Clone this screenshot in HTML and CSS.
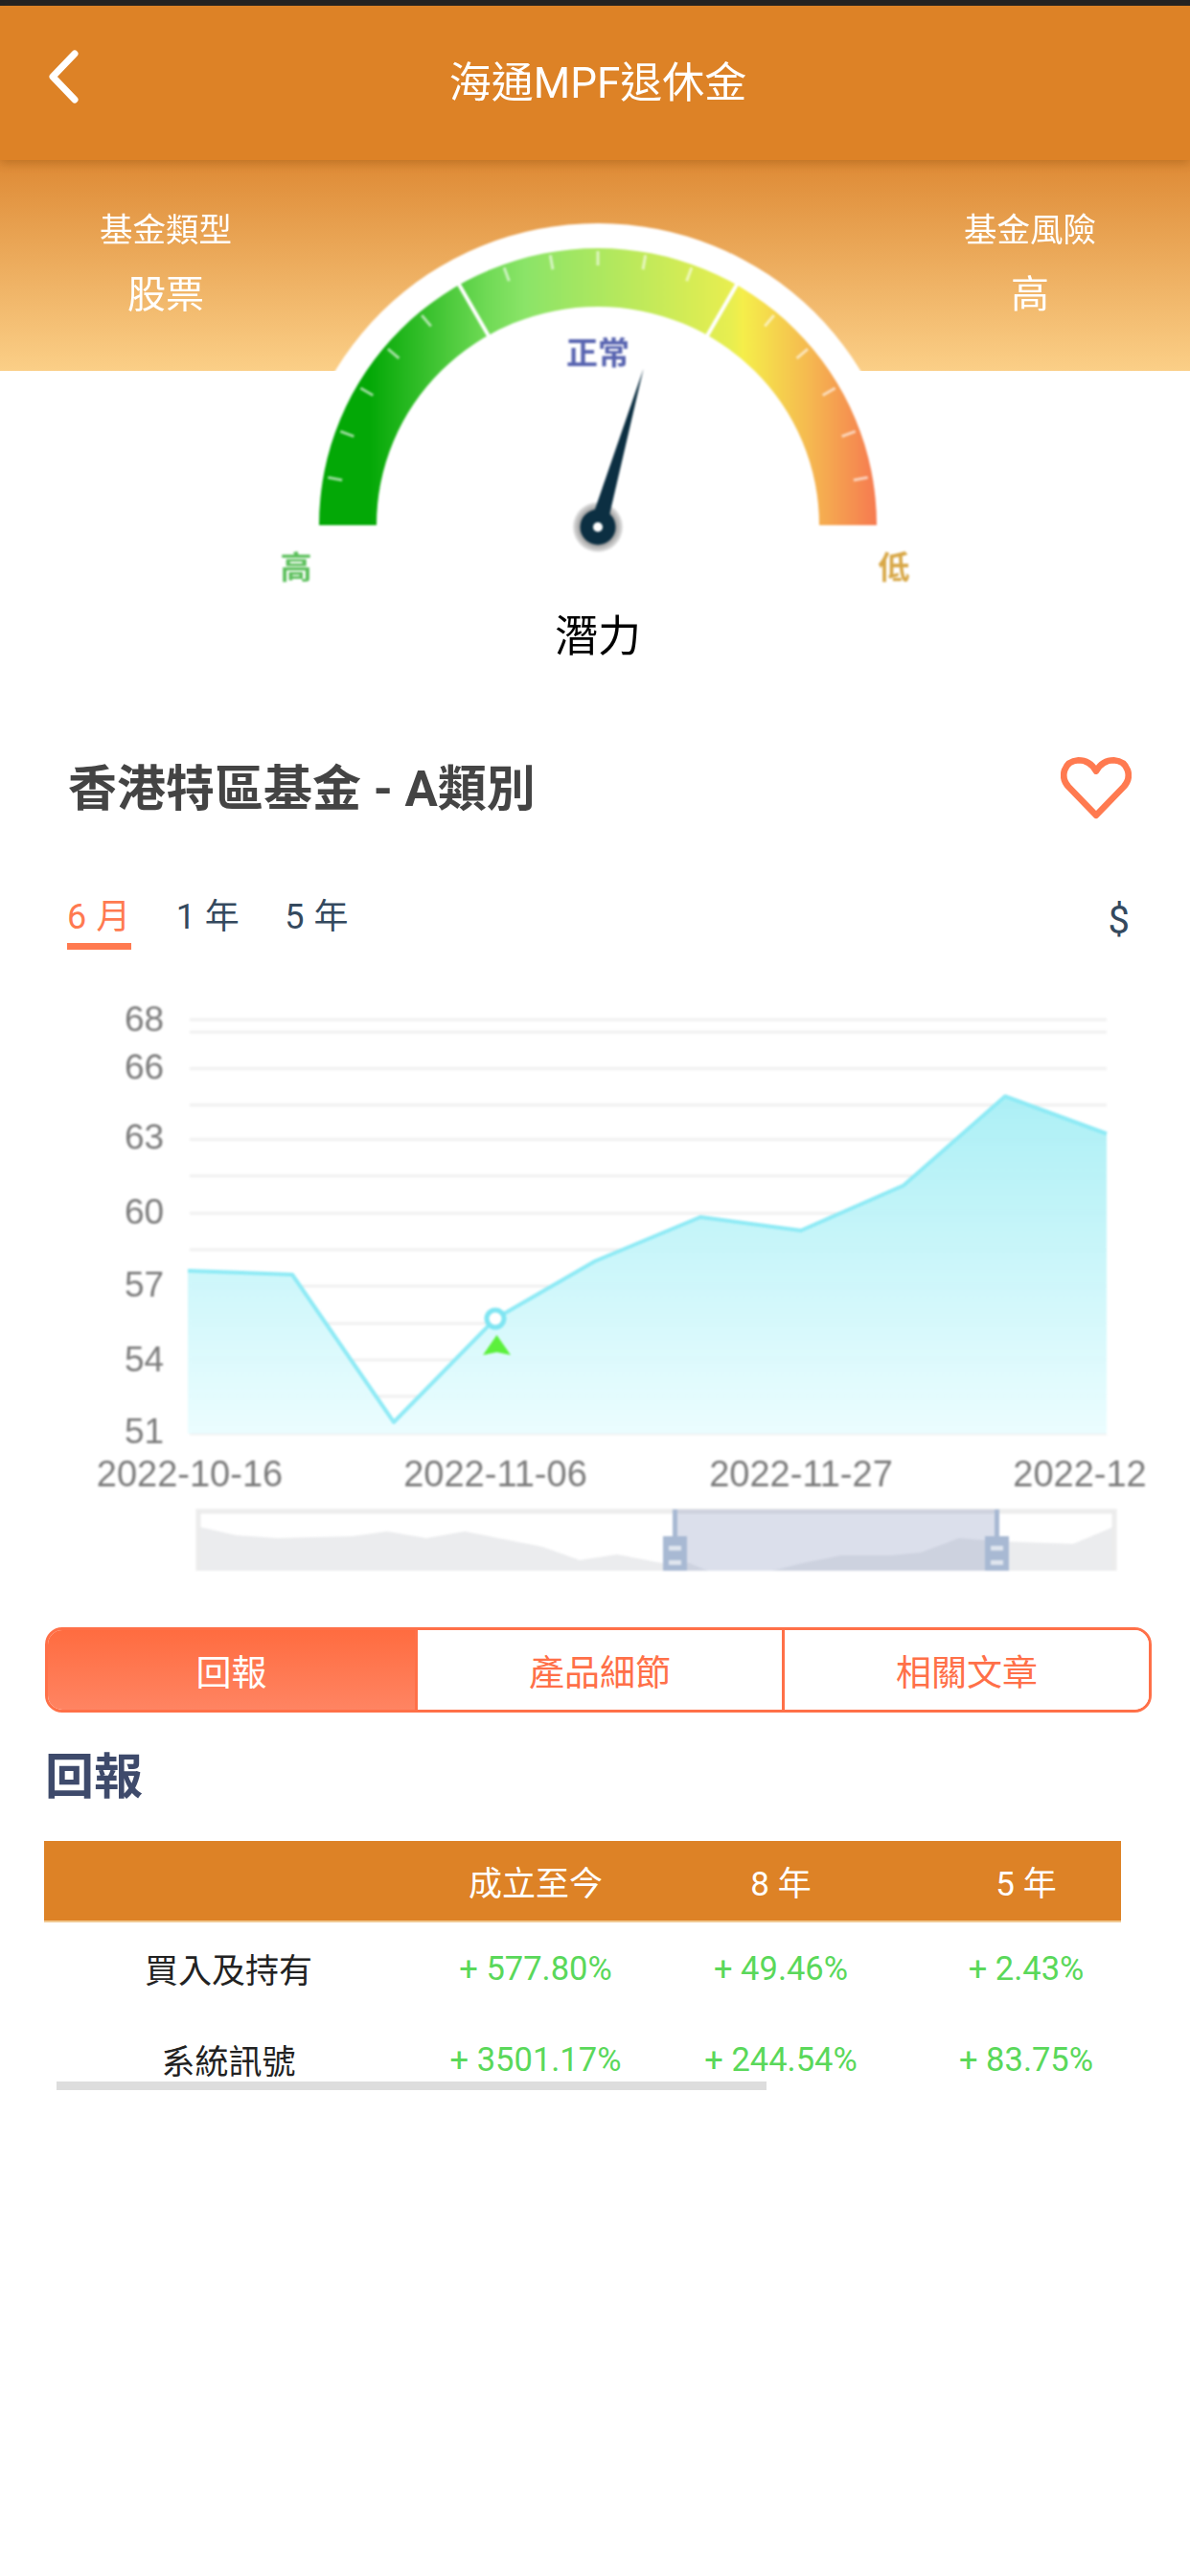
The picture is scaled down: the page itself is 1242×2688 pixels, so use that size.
FILE: index.html
```html
<!DOCTYPE html>
<html lang="zh-Hant">
<head>
<meta charset="utf-8">
<title>海通MPF退休金</title>
<link rel="stylesheet" href="styles.css">
</head>
<body>
<div class="statusbar"></div>
<header class="appbar">
  <svg class="back" viewBox="0 0 34 56"><path d="M29 4 L6 28 L29 52"/></svg>
  <h1 class="apptitle">海通MPF退休金</h1>
</header>
<section class="summary">
  <div class="info info-left"><span class="info-label">基金類型</span><span class="info-value">股票</span></div>
  <div class="gauge-col">
    <svg class="gauge" viewBox="280 167 688 468">
      <defs>
        <linearGradient id="band" gradientUnits="userSpaceOnUse" x1="333" y1="0" x2="915" y2="0">
          <stop offset="0.09" stop-color="#03a806"/>
          <stop offset="0.3" stop-color="#6fda55"/>
          <stop offset="0.37" stop-color="#8be468"/>
          <stop offset="0.74" stop-color="#e8ee50"/>
          <stop offset="0.76" stop-color="#f5ee4a"/>
          <stop offset="0.88" stop-color="#f5b850"/>
          <stop offset="1" stop-color="#f67a50"/>
        </linearGradient>
        <radialGradient id="halo"><stop offset="0.7" stop-color="#999"/><stop offset="1" stop-color="#e4e4e4"/></radialGradient>
      </defs>
      <ellipse cx="624" cy="548" rx="319" ry="315" fill="#fff"/>
      <path d="M333 548 A291 289 0 0 1 915 548 L855 548 A231 228 0 0 0 393 548 Z" fill="url(#band)"/>
      <g class="ticks">
        <line x1="624" y1="262" x2="624" y2="277" transform="rotate(-80 624 548)"/>
        <line x1="624" y1="262" x2="624" y2="277" transform="rotate(-70 624 548)"/>
        <line x1="624" y1="262" x2="624" y2="277" transform="rotate(-60 624 548)"/>
        <line x1="624" y1="262" x2="624" y2="277" transform="rotate(-50 624 548)"/>
        <line x1="624" y1="262" x2="624" y2="277" transform="rotate(-40 624 548)"/>
        <line x1="624" y1="262" x2="624" y2="277" transform="rotate(-20 624 548)"/>
        <line x1="624" y1="262" x2="624" y2="277" transform="rotate(-10 624 548)"/>
        <line x1="624" y1="262" x2="624" y2="277"/>
        <line x1="624" y1="262" x2="624" y2="277" transform="rotate(10 624 548)"/>
        <line x1="624" y1="262" x2="624" y2="277" transform="rotate(20 624 548)"/>
        <line x1="624" y1="262" x2="624" y2="277" transform="rotate(40 624 548)"/>
        <line x1="624" y1="262" x2="624" y2="277" transform="rotate(50 624 548)"/>
        <line x1="624" y1="262" x2="624" y2="277" transform="rotate(60 624 548)"/>
        <line x1="624" y1="262" x2="624" y2="277" transform="rotate(70 624 548)"/>
        <line x1="624" y1="262" x2="624" y2="277" transform="rotate(80 624 548)"/>
      </g>
      <g class="dividers">
        <line x1="624" y1="258" x2="624" y2="320" transform="rotate(-30 624 548)"/>
        <line x1="624" y1="258" x2="624" y2="320" transform="rotate(30 624 548)"/>
      </g>
      <text class="g-normal" x="624" y="380">正常</text>
      <circle cx="624" cy="550" r="26" fill="url(#halo)"/>
      <polygon points="671.5,385 632.6,552.5 615.4,547.5" fill="#0c2f42"/>
      <circle cx="624" cy="550" r="18.5" fill="#0c2f42"/>
      <circle cx="624" cy="550" r="5" fill="#fff"/>
      <text class="g-high" x="309" y="604">高</text>
      <text class="g-low" x="933" y="604">低</text>
    </svg>
    <div class="gauge-caption">潛力</div>
  </div>
  <div class="info info-right"><span class="info-label">基金風險</span><span class="info-value">高</span></div>
</section>

<div class="fund-row">
  <h2 class="fund-name">香港特區基金 - A類別</h2>
  <svg class="heart" viewBox="0 0 72 66"><path d="M36 61 L8 32 C-1 22 3 6 18 5 C26 5 32 9 36 16 C40 9 46 5 54 5 C69 6 73 22 64 32 Z"/></svg>
</div>

<div class="range-row">
  <nav class="ranges">
    <span class="range range-on">6 月</span>
    <span class="range">1 年</span>
    <span class="range">5 年</span>
  </nav>
  <span class="currency">$</span>
</div>

<svg class="chart" viewBox="0 991 1242 648">
  <defs>
    <linearGradient id="area" gradientUnits="userSpaceOnUse" x1="0" y1="1144" x2="0" y2="1496">
      <stop offset="0" stop-color="#a8eff5"/>
      <stop offset="1" stop-color="#eafdff"/>
    </linearGradient>
  </defs>
  <g class="grid">
    <line x1="198" x2="1155" y1="1064" y2="1064"/>
    <line x1="198" x2="1155" y1="1077" y2="1077"/>
    <line x1="198" x2="1155" y1="1115" y2="1115"/>
    <line x1="198" x2="1155" y1="1153" y2="1153"/>
    <line x1="198" x2="1155" y1="1189" y2="1189"/>
    <line x1="198" x2="1155" y1="1227" y2="1227"/>
    <line x1="198" x2="1155" y1="1266" y2="1266"/>
    <line x1="198" x2="1155" y1="1304" y2="1304"/>
    <line x1="198" x2="1155" y1="1342" y2="1342"/>
    <line x1="198" x2="1155" y1="1381" y2="1381"/>
    <line x1="198" x2="1155" y1="1419" y2="1419"/>
    <line x1="198" x2="1155" y1="1457" y2="1457"/>
    <line x1="198" x2="1155" y1="1496" y2="1496"/>
  </g>
  <polygon class="area" points="196,1326 305,1330 411,1484 517,1376 621,1316 731,1270 836,1284 943,1237 1049,1144 1155,1183 1155,1496 196,1496"/>
  <polyline class="line" points="196,1326 305,1330 411,1484 517,1376 621,1316 731,1270 836,1284 943,1237 1049,1144 1155,1183"/>
  <circle class="dot" cx="517" cy="1376" r="9"/>
  <path class="arrow" d="M518.5 1393 L533 1414 L518.5 1411 L504 1414 Z"/>
  <g class="ylabels">
    <text x="130" y="1076">68</text>
    <text x="130" y="1126">66</text>
    <text x="130" y="1199">63</text>
    <text x="130" y="1277">60</text>
    <text x="130" y="1353">57</text>
    <text x="130" y="1431">54</text>
    <text x="130" y="1506">51</text>
  </g>
  <g class="xlabels">
    <text x="198" y="1551">2022-10-16</text>
    <text x="517" y="1551">2022-11-06</text>
    <text x="836" y="1551">2022-11-27</text>
    <text x="1127" y="1551">2022-12</text>
  </g>
  <polygon class="mini-area" points="207,1593 246,1602 289,1605 368,1603 404,1598 445,1605 485,1598 566,1614 605,1628 644,1622 691,1631 719,1631 739,1639 806,1639 838,1631 878,1623 930,1623 961,1620 1001,1605 1037,1608 1120,1611 1163,1593 1163,1639 207,1639"/>
  <path class="mini-frame" d="M207 1639 V1577 H1163 V1639"/>
  <rect class="mini-sel" x="705" y="1575" width="336" height="64"/>
  <g class="handle">
    <rect x="702" y="1575" width="5" height="30"/>
    <rect x="692" y="1603" width="25" height="36"/>
    <rect class="handle-mark" x="698" y="1613" width="13" height="5"/>
    <rect class="handle-mark" x="698" y="1628" width="13" height="5"/>
  </g>
  <g class="handle">
    <rect x="1038" y="1575" width="5" height="30"/>
    <rect x="1028" y="1603" width="25" height="36"/>
    <rect class="handle-mark" x="1034" y="1613" width="13" height="5"/>
    <rect class="handle-mark" x="1034" y="1628" width="13" height="5"/>
  </g>
</svg>

<div class="segment">
  <div class="seg seg-on">回報</div>
  <div class="seg">產品細節</div>
  <div class="seg">相關文章</div>
</div>

<h3 class="section-title">回報</h3>

<div class="returns">
  <div class="tr thead"><span></span><span>成立至今</span><span>8 年</span><span>5 年</span></div>
  <div class="tr"><span class="rowname">買入及持有</span><span class="gain">+ 577.80%</span><span class="gain">+ 49.46%</span><span class="gain">+ 2.43%</span></div>
  <div class="tr"><span class="rowname">系統訊號</span><span class="gain">+ 3501.17%</span><span class="gain">+ 244.54%</span><span class="gain">+ 83.75%</span></div>
  <div class="scrollbar"></div>
</div>
</body>
</html>
```
FILE: styles.css
```css
* { box-sizing: border-box; }
html, body { margin: 0; padding: 0; background: #fff; }
body {
  width: 1242px;
  min-height: 2688px;
  font-family: Roboto, "Noto Sans CJK TC", sans-serif;
  overflow-x: hidden;
}

.statusbar { height: 6px; background: #232323; }

.appbar {
  position: relative;
  z-index: 1;
  height: 161px;
  background: #dd8226;
  box-shadow: 0 3px 10px rgba(110, 60, 0, 0.3);
  display: grid;
  grid-template-columns: 1fr auto 1fr;
  align-items: center;
}
.back {
  width: 34px;
  height: 56px;
  margin-left: 49px;
  margin-top: -13px;
  fill: none;
  stroke: #fff;
  stroke-width: 7;
  stroke-linecap: round;
  stroke-linejoin: round;
  grid-column: 1;
  grid-row: 1;
}
.apptitle {
  grid-column: 2;
  grid-row: 1;
  margin: 0 0 0 6px;
  font-size: 44px;
  font-weight: 400;
  color: #fff;
  line-height: 1;
  filter: blur(0.4px);
}

.summary {
  display: grid;
  grid-template-columns: 280px 688px 274px;
  background: linear-gradient(#de8a35, #fbcf87) top / 100% 220px no-repeat;
}
.info {
  display: inline-flex;
  flex-direction: column;
  align-items: center;
  align-self: start;
  justify-self: start;
  padding-top: 48px;
  color: #fff;
  filter: blur(0.4px);
}
.info-left { margin-left: 104px; }
.info-right { margin-left: 38px; }
.info-label { font-size: 34.5px; line-height: 50px; }
.info-value { font-size: 40px; line-height: 56px; margin-top: 15px; }

.gauge { display: block; width: 688px; height: 468px; filter: blur(0.8px); }
.ticks line { stroke: rgba(255, 255, 255, 0.6); stroke-width: 3; }
.dividers line { stroke: #fff; stroke-width: 4; }
.g-normal { font-size: 33px; font-weight: 700; fill: #5864b0; text-anchor: middle; }
.g-high { font-size: 33px; font-weight: 700; fill: #5cc05c; text-anchor: middle; }
.g-low { font-size: 33px; font-weight: 700; fill: #d8a848; text-anchor: middle; }
.gauge-caption {
  text-align: center;
  font-size: 45px;
  line-height: 60px;
  color: #000;
  filter: blur(0.4px);
}

.fund-row {
  display: flex;
  justify-content: space-between;
  align-items: center;
  height: 66px;
  margin-top: 94px;
  padding: 0 61px 0 71px;
}
.fund-name {
  margin: 3px 0 0;
  font-size: 51px;
  font-weight: 700;
  color: #444;
  line-height: 1;
  filter: blur(0.5px);
}
.heart {
  width: 74px;
  height: 68px;
  fill: none;
  stroke: #ff7a50;
  stroke-width: 6.5;
  stroke-linejoin: round;
  filter: blur(0.4px);
}

.range-row {
  display: flex;
  justify-content: space-between;
  margin-top: 76px;
  padding: 0 63px 0 70px;
}
.ranges { display: flex; gap: 47px; }
.range {
  font-size: 36px;
  line-height: 53px;
  height: 60px;
  color: #34495e;
  letter-spacing: 0.5px;
  border-bottom: 7px solid transparent;
}
.range-on { color: #ff7a50; border-bottom-color: #ff7a50; }
.currency { font-size: 40px; line-height: 60px; color: #34495e; }

.chart { display: block; width: 1242px; height: 648px; filter: blur(0.8px); }
.grid line { stroke: #f0f0f0; stroke-width: 3; }
.area { fill: url(#area); fill-opacity: 0.95; }
.line { fill: none; stroke: #8eeaf5; stroke-width: 4; stroke-linejoin: round; }
.dot { fill: #fff; stroke: #7fe5f2; stroke-width: 5; }
.arrow { fill: #5cf03c; }
.ylabels text, .xlabels text {
  font-family: "Liberation Sans", Arial, sans-serif;
  font-size: 37px;
  fill: #7c7c7c;
}
.xlabels text { text-anchor: middle; font-size: 38px; }
.mini-area { fill: #ebecee; }
.mini-frame { fill: none; stroke: #ececec; stroke-width: 5; }
.mini-sel { fill: rgba(135, 150, 190, 0.3); }
.handle rect { fill: #a8b9d3; }
.handle .handle-mark { fill: #dfe5ee; }

.segment {
  display: grid;
  grid-template-columns: repeat(3, 1fr);
  margin: 59px 0 0 47px;
  width: 1155px;
  height: 89px;
  border: 3px solid #ff7048;
  border-radius: 18px;
  overflow: hidden;
}
.seg {
  display: flex;
  align-items: center;
  justify-content: center;
  font-size: 37px;
  color: #ff7048;
  background: #fff;
}
.seg + .seg { border-left: 3px solid #ff7048; }
.seg-on { color: #fff; background: linear-gradient(#ff6c40, #ff8462); }

.section-title {
  margin: 33px 0 0 47px;
  font-size: 51px;
  line-height: 70px;
  font-weight: 700;
  color: #3e4a6b;
  filter: blur(0.4px);
}

.returns { position: relative; margin: 31px 0 0 46px; }
.tr {
  display: grid;
  grid-template-columns: 385px repeat(3, 256px);
  align-items: center;
  height: 95px;
  text-align: center;
  font-size: 35px;
}
.thead {
  width: 1124px;
  height: 85px;
  background: #dd8226;
  border-bottom: 2px solid #f0c890;
  color: #fff;
}
.rowname { color: #222; }
.gain { color: #5ad85a; font-size: 34.5px; }
.scrollbar {
  position: absolute;
  left: 13px;
  top: 251px;
  width: 741px;
  height: 9px;
  background: #ddd;
}
```
